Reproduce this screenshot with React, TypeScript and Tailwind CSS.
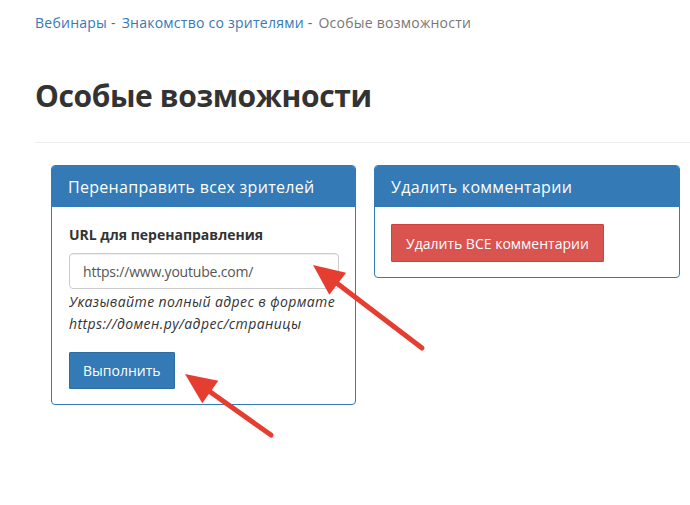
const font = { fontFamily: '"Open Sans", "Liberation Sans", sans-serif' };

const Arrow = ({ x1, y1, x2, y2 }: { x1: number; y1: number; x2: number; y2: number }) => {
  // tail (x1,y1) -> tip (x2,y2)
  const a = Math.atan2(y2 - y1, x2 - x1);
  const len = 34;
  const spread = 0.42;
  const p1 = [x2 - len * Math.cos(a - spread), y2 - len * Math.sin(a - spread)];
  const p2 = [x2 - len * Math.cos(a + spread), y2 - len * Math.sin(a + spread)];
  const bx = x2 - len * 0.8 * Math.cos(a);
  const by = y2 - len * 0.8 * Math.sin(a);
  return (
    <g>
      <line x1={x1} y1={y1} x2={bx} y2={by} stroke="#e53e30" strokeWidth={5} strokeLinecap="round" />
      <polygon points={`${x2},${y2} ${p1[0]},${p1[1]} ${p2[0]},${p2[1]}`} fill="#e53e30" />
    </g>
  );
};

export default function App() {
  return (
    <div className="relative w-[690px] h-[505px] bg-white overflow-hidden text-[#333]" style={font}>
      <div className="pl-[35px] pt-[13px]">
        <div className="text-[14px] leading-[20px] tracking-[0.25px]">
          <a className="text-[#337ab7]">Вебинары</a>
          <span className="text-[#666]"> - </span>
          <a className="text-[#337ab7] ml-[2px]">Знакомство со зрителями</a>
          <span className="text-[#666]"> - </span>
          <span className="text-[#777] ml-[2px]">Особые возможности</span>
        </div>
        <h1 className="mt-[45px] text-[30px] leading-[36px] font-bold text-[#333] tracking-[-0.4px]">
          Особые возможности
        </h1>
        <div className="mt-[28px] border-t border-[#eeeeee]" />
      </div>

      <div className="flex items-start gap-[18px] pl-[51px] pt-[22px]">
        <div className="w-[305px] border border-[#337ab7] rounded-[4px] overflow-hidden">
          <div className="bg-[#337ab7] h-[41px] px-[16px] flex items-center text-white text-[16px] tracking-[0.3px]">
            Перенаправить всех зрителей
          </div>
          <div className="px-[17px] pt-[18px] pb-[15px]">
            <div className="text-[14px] font-bold leading-[20px]">URL для перенаправления</div>
            <div className="mt-[8px] w-[270px] h-[36px] border border-[#ccc] rounded-[4px] px-[13px] flex items-center text-[14px] text-[#555] tracking-[-0.2px] shadow-[inset_0_1px_1px_rgba(0,0,0,0.075)]">
              https://www.youtube.com/
            </div>
            <div className="mt-[2px] text-[14px] italic leading-[22px] tracking-[0.4px] text-[#333]">
              Указывайте полный адрес в формате
              <br />
              https://домен.ру/адрес/страницы
            </div>
            <button className="mt-[17px] h-[37px] px-[13px] bg-[#337ab7] border border-[#2e6da4] text-white text-[14px] rounded-[1px]">
              Выполнить
            </button>
          </div>
        </div>

        <div className="w-[306px] border border-[#337ab7] rounded-[4px] overflow-hidden">
          <div className="bg-[#337ab7] h-[41px] px-[16px] flex items-center text-white text-[16px] tracking-[0.3px]">
            Удалить комментарии
          </div>
          <div className="px-[16px] pt-[17px] pb-[15px]">
            <button className="h-[38px] px-[14px] bg-[#d9534f] border border-[#d43f3a] text-white text-[14px] rounded-[1px]">
              Удалить ВСЕ комментарии
            </button>
          </div>
        </div>
      </div>

      <svg className="absolute inset-0 pointer-events-none" width={690} height={505}>
        <Arrow x1={422} y1={348} x2={313} y2={265} />
        <Arrow x1={271} y1={435} x2={185} y2={374} />
      </svg>
    </div>
  );
}
